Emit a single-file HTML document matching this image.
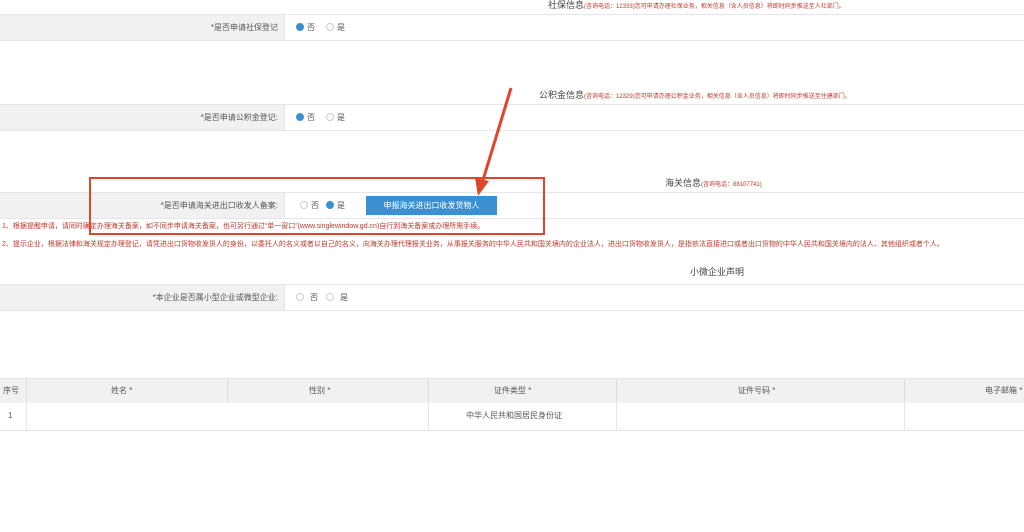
<!DOCTYPE html>
<html><head><meta charset="utf-8"><style>
body{margin:0;width:1024px;height:532px;background:#fff;position:relative;overflow:hidden;font-family:"Liberation Sans","Noto Sans CJK SC",sans-serif;color:#555;}
.a{position:absolute;white-space:nowrap}
.row{position:absolute;left:0;width:1024px;height:25px;border-top:1px solid #e6e6e6;border-bottom:1px solid #e6e6e6;background:#fff}
.lab{position:absolute;left:0;top:0;width:285px;height:25px;background:#f1f1f1;border-right:1px solid #e3e3e3;font-size:8px;text-align:right;line-height:25px;box-sizing:border-box;padding-right:6px}
.r{position:absolute;top:8px;width:8px;height:8px;border-radius:50%;border:1px solid #ccc;box-sizing:border-box;background:#fff}
.on{background:#3b8fd3;border-color:#3b8fd3}
.t{position:absolute;top:0;line-height:25px;font-size:8px}
.red{color:#c0392b;font-size:6px}
.n{font-size:7px}
.h{font-size:9px;color:#444}
</style></head><body>
<div class="a h" style="left:548px;top:-2px">社保信息<span class="red">(咨询电话：12333)您可申请办理社保业务，相关信息（含人员信息）将即时同步推送至人社部门。</span></div>
<div class="row" style="top:14px"><div class="lab">*是否申请社保登记</div><div class="r on" style="left:296px"></div><span class="t" style="left:307px">否</span><div class="r" style="left:326px"></div><span class="t" style="left:337px">是</span></div>
<div class="a h" style="left:539px;top:88px">公积金信息<span class="red">(咨询电话：12329)您可申请办理公积金业务，相关信息（含人员信息）将即时同步推送至住建部门。</span></div>
<div class="row" style="top:104px"><div class="lab">*是否申请公积金登记:</div><div class="r on" style="left:296px"></div><span class="t" style="left:307px">否</span><div class="r" style="left:326px"></div><span class="t" style="left:337px">是</span></div>
<div class="a h" style="left:665px;top:176px">海关信息<span class="red">(咨询电话：88107741)</span></div>
<div class="row" style="top:192px"><div class="lab">*是否申请海关进出口收发人备案:</div><div class="r" style="left:300px"></div><span class="t" style="left:311px">否</span><div class="r on" style="left:326px"></div><span class="t" style="left:337px">是</span>
<div style="position:absolute;left:366px;top:3px;width:131px;height:19px;background:#3b8fd3;color:#fff;font-size:8px;line-height:19px;text-align:center">申报海关进出口收发货物人</div></div>
<div class="a red n" style="left:2px;top:221px">1、根据提醒申请，请同时确定办理海关备案，如不同步申请海关备案，也可另行通过“单一窗口”(www.singlewindow.gd.cn)自行到海关备案或办理所需手续。</div>
<div class="a red n" style="left:2px;top:239px">2、提示企业，根据法律和海关规定办理登记，请凭进出口货物收发货人的身份，以委托人的名义或者以自己的名义，向海关办理代理报关业务，从事报关服务的中华人民共和国关境内的企业法人，进出口货物收发货人，是指依法直接进口或者出口货物的中华人民共和国关境内的法人、其他组织或者个人。</div>
<div class="a h" style="left:690px;top:265px">小微企业声明</div>
<div class="row" style="top:284px"><div class="lab">*本企业是否属小型企业或微型企业:</div><div class="r" style="left:296px"></div><span class="t" style="left:310px">否</span><div class="r" style="left:326px"></div><span class="t" style="left:340px">是</span></div>
<div style="position:absolute;left:0;top:378px;width:1024px;height:24px;background:#f1f1f1;border-top:1px solid #e3e3e3;font-size:8px;line-height:24px">
<span class="a" style="left:3px">序号</span><span class="a" style="left:111px">姓名 *</span><span class="a" style="left:309px">性别 *</span><span class="a" style="left:494px">证件类型 *</span><span class="a" style="left:738px">证件号码 *</span><span class="a" style="left:985px">电子邮箱 *</span>
<div class="a" style="left:26px;top:0;height:24px;border-left:1px solid #ddd"></div><div class="a" style="left:227px;top:0;height:24px;border-left:1px solid #ddd"></div><div class="a" style="left:428px;top:0;height:24px;border-left:1px solid #ddd"></div><div class="a" style="left:616px;top:0;height:24px;border-left:1px solid #ddd"></div><div class="a" style="left:904px;top:0;height:24px;border-left:1px solid #ddd"></div></div>
<div style="position:absolute;left:0;top:402px;width:1024px;height:28px;border-bottom:1px solid #e3e3e3;font-size:8px;line-height:28px">
<span class="a" style="left:8px">1</span><span class="a" style="left:466px">中华人民共和国居民身份证</span>
<div class="a" style="left:26px;top:0;height:28px;border-left:1px solid #e6e6e6"></div><div class="a" style="left:428px;top:0;height:28px;border-left:1px solid #e6e6e6"></div><div class="a" style="left:616px;top:0;height:28px;border-left:1px solid #e6e6e6"></div><div class="a" style="left:904px;top:0;height:28px;border-left:1px solid #e6e6e6"></div></div>
<div style="position:absolute;left:89px;top:177px;width:452px;height:54px;border:2px solid #d9482b"></div>
<svg style="position:absolute;left:0;top:0" width="1024" height="532"><line x1="511" y1="88" x2="483" y2="180" stroke="#e0452a" stroke-width="3"/><polygon points="475,178 489,181 478,196" fill="#e0452a"/></svg>
</body></html>
